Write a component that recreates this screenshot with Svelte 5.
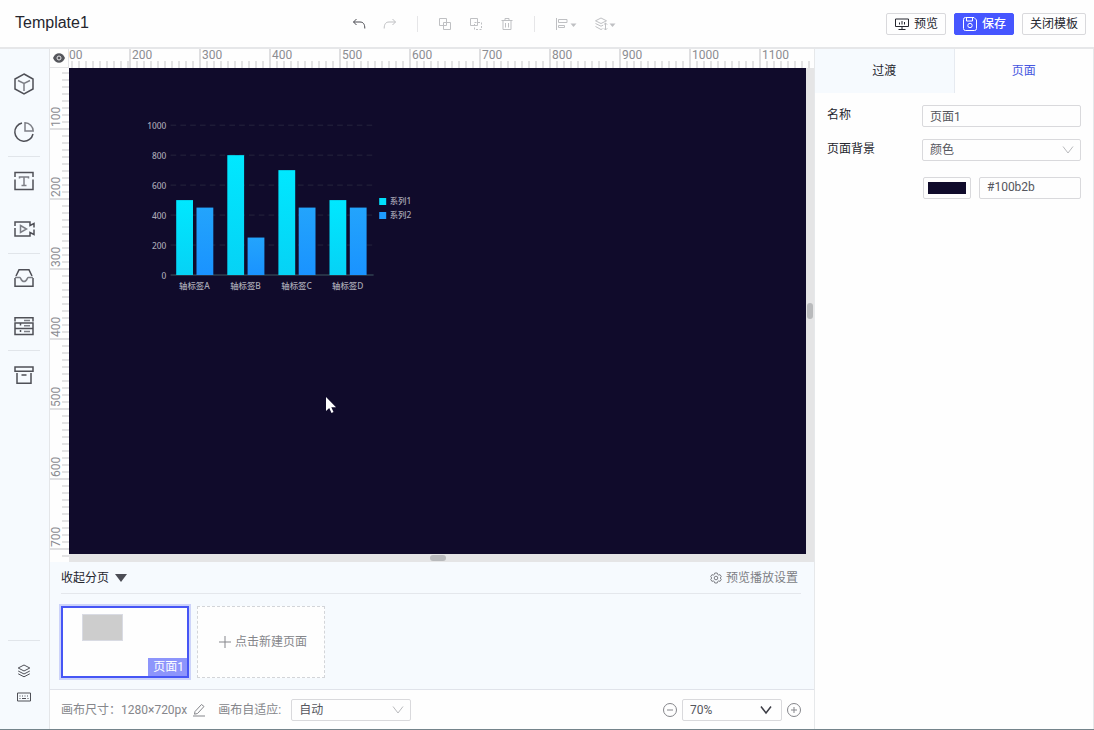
<script lang="ts">
    let pageName = $state("页面1");
    let backgroundType = $state("颜色");
    let backgroundColor = $state("#100b2b");
    let fitMode = $state("自动");
    let zoom = $state("70%");

    // The last vertical segment only carries ticks
    const rulerX = ["00", "200", "300", "400", "500", "600", "700", "800", "900", "1000", "1100"];
    const rulerY = ["100", "200", "300", "400", "500", "600", "700", ""];

    const gridValues = [0, 200, 400, 600, 800, 1000];
    const chartData = [
        { label: "轴标签A", a: 500, b: 450 },
        { label: "轴标签B", a: 800, b: 250 },
        { label: "轴标签C", a: 700, b: 450 },
        { label: "轴标签D", a: 500, b: 450 },
    ];

    // Plot area of the chart, in its own viewBox units
    const plotLeft = 58;
    const plotBottom = 250;
    const columnWidth = 73;
    const barWidth = 24;

    function barHeight(value: number) {
        return (value / 1000) * 214;
    }
</script>

{#snippet chevron()}
    <svg class="chevron" width="12" height="12" viewBox="0 0 12 12"><path d="M1 2.500 6 9l5-6.500" /></svg>
{/snippet}

<div class="editor">
    <header class="topbar">
        <h1 class="title">Template1</h1>

        <div class="toolbar">
            <button class="tool active" aria-label="撤销">
                <svg width="14" height="14" viewBox="0 0 14 14"><path d="M4.500 2 1.500 5l3 3M1.500 5H8c3.200 0 4.800 2 4.800 6.500" /></svg>
            </button>
            <button class="tool" aria-label="重做">
                <svg width="14" height="14" viewBox="0 0 14 14"><path d="m9.500 2 3 3-3 3M12.500 5H6C2.800 5 1.200 7 1.200 11.500" /></svg>
            </button>
            <span class="separator"></span>
            <button class="tool" aria-label="组合">
                <svg width="14" height="14" viewBox="0 0 14 14"><path d="M1.500 1.500h7v7h-7zM5.500 5.500h7v7h-7z" /></svg>
            </button>
            <button class="tool" aria-label="取消组合">
                <svg width="14" height="14" viewBox="0 0 14 14"><path d="M1.500 1.500h7v7h-7z" /><path stroke-dasharray="2 1.500" d="M5.500 5.500h7v7h-7z" /></svg>
            </button>
            <button class="tool" aria-label="删除">
                <svg width="14" height="14" viewBox="0 0 14 14"><path d="M1.500 3.500h11M5 3.500v-2h4v2M3 3.500v9h8v-9M5.500 6v4.500M8.500 6v4.500" /></svg>
            </button>
            <span class="separator"></span>
            <button class="tool" aria-label="对齐">
                <svg width="22" height="14" viewBox="0 0 22 14">
                    <path d="M1.500 1v12M3.500 2.500h8.500v3h-8.500zM3.500 8.500h6v2h-6z" />
                    <path class="solid" d="M15.500 6.500h6l-3 3.500z" />
                </svg>
            </button>
            <button class="tool" aria-label="图层顺序">
                <svg width="22" height="14" viewBox="0 0 22 14">
                    <path d="M7 1 1.500 3.800 7 6.500l5.500-2.700zM1.500 6.500 7 9.200l2-1M1.500 9.500 7 12.500l1.500-.8M11.500 6v7M9.800 7.700l1.700-1.700 1.700 1.700M9.800 11.300l1.700 1.700 1.700-1.700" />
                    <path class="solid" d="M15.500 6.500h6l-3 3.500z" />
                </svg>
            </button>
        </div>

        <div class="actions">
            <button class="btn">
                <svg width="16" height="14" viewBox="0 0 16 14"><path d="M1.500 2h13v7.500h-13zM4.500 12.500h7M8 9.500v3M5.500 5.500v2M8 4v3.500M10.500 5v2.500" /></svg>
                预览
            </button>
            <button class="btn primary">
                <svg width="16" height="16" viewBox="0 0 16 16"><path d="M1.500 3.500v9q0 2 2 2h9q2 0 2-2V4l-2.500-2.500h-8.500q-2 0-2 2zM4.500 1.500v3.500h6V1.500" /><circle cx="8" cy="9.500" r="2.200" /></svg>
                保存
            </button>
            <button class="btn">关闭模板</button>
        </div>
    </header>

    <div class="body">
        <nav class="sidebar">
            <button aria-label="组件">
                <svg width="22" height="22" viewBox="0 0 22 22"><path d="m11 1 9 5v10l-9 5-9-5V6z" /><path class="inner" d="m5 7.500 6 3 6-3M11 10.500v7.500" /></svg>
            </button>
            <button aria-label="图表">
                <svg width="22" height="22" viewBox="0 0 22 22"><path d="M9 2a9.200 9.200 0 1 0 11 11" /><path class="inner" d="M12 1.800V10h8.200A8.500 8.500 0 0 0 12 1.800z" /></svg>
            </button>
            <hr />
            <button aria-label="文本">
                <svg width="22" height="22" viewBox="0 0 22 22"><path d="M2 7V2.500h18V7M2 9.500v10h18v-10" /><path class="inner" d="M6.500 8.500V7h9v1.500M11 7v8.500M8.500 15.500h5" /></svg>
            </button>
            <button aria-label="媒体">
                <svg width="22" height="22" viewBox="0 0 22 22"><path d="M2 8V4h15v3.500l4-2v4M2 10v8h15v-3.500l4 2v-5" /><path class="inner" d="m7.500 7.500 6 3.500-6 3.500z" /></svg>
            </button>
            <hr />
            <button aria-label="素材">
                <svg width="22" height="22" viewBox="0 0 22 22"><path d="M3 9 6 2.800h10L19 9M2 11v8.200h18V11" /><path class="inner" d="M2 10.500h5c.8 0 1 4 4 4s3.200-4 4-4h5" /></svg>
            </button>
            <button aria-label="数据">
                <svg width="22" height="22" viewBox="0 0 22 22"><path d="M2 6.500V2.800h18v3.700M2 8h18v5.500H2zM2 13.500h18v6H2zM7.500 8.500v2M7.500 15v2" /><path class="inner" d="M11 5.500h6M11 10.700h6M11 16.500h6" /></svg>
            </button>
            <hr />
            <button aria-label="收藏">
                <svg width="22" height="22" viewBox="0 0 22 22"><path d="M2 3h18v4.200H2zM4 9v10.200h14V9M8.500 11h5" /></svg>
            </button>

            <div class="sidebar-bottom">
                <hr />
                <button aria-label="图层">
                    <svg width="14" height="14" viewBox="0 0 14 14"><path d="M7 1 1.200 4 7 7l5.800-3zM1.200 7 7 10l5.800-3M1.200 9.800l5.800 3 5.800-3" /></svg>
                </button>
                <button aria-label="快捷键">
                    <svg width="16" height="14" viewBox="0 0 16 14"><path d="M1.500 3h13v8h-13z" /><path stroke-dasharray="1 1.500" d="M3.500 6h9M3.500 8.500h1M11.500 8.500h1" /><path d="M6 8.500h4" /></svg>
                </button>
            </div>
        </nav>

        <main class="workspace">
            <section class="stage">
                <button class="eye" aria-label="显示参考线">
                    <svg width="14" height="10" viewBox="0 0 14 10"><path fill="#55565c" stroke="none" d="M1 5c1.200-3 3.400-4.800 6-4.800S11.800 2 13 5c-1.200 3-3.400 4.800-6 4.800S2.200 8 1 5z" /><circle cx="7" cy="5" r="2" stroke="#e8e8ea" /></svg>
                </button>
                <div class="ruler-x">
                    {#each rulerX as value}
                        <span>{value}</span>
                    {/each}
                </div>
                <div class="ruler-y">
                    {#each rulerY as value}
                        <span>{value}</span>
                    {/each}
                </div>

                <div class="canvas" style="background: {backgroundColor}">
                    <svg class="chart" viewBox="0 0 430 290">
                        <defs>
                            <linearGradient id="series-a" x1="0" y1="0" x2="0" y2="1">
                                <stop offset="0" stop-color="#00e8ff" />
                                <stop offset="1" stop-color="#06d2f5" />
                            </linearGradient>
                            <linearGradient id="series-b" x1="0" y1="0" x2="0" y2="1">
                                <stop offset="0" stop-color="#23a4fc" />
                                <stop offset="1" stop-color="#1a93ff" />
                            </linearGradient>
                        </defs>
                        {#each gridValues as value}
                            <text x="52" y={plotBottom - barHeight(value) + 5} text-anchor="end">{value}</text>
                            {#if value > 0}
                                <line class="grid-line" x1={plotLeft} x2={plotLeft + 290} y1={plotBottom - barHeight(value)} y2={plotBottom - barHeight(value)} />
                            {/if}
                        {/each}
                        <line class="axis" x1={plotLeft} x2={plotLeft + 290} y1={plotBottom} y2={plotBottom} />
                        {#each chartData as item, i}
                            <rect fill="url(#series-a)" x={plotLeft + i * columnWidth + 8} y={plotBottom - barHeight(item.a)} width={barWidth} height={barHeight(item.a)} />
                            <rect fill="url(#series-b)" x={plotLeft + i * columnWidth + 37} y={plotBottom - barHeight(item.b)} width={barWidth} height={barHeight(item.b)} />
                            <text x={plotLeft + i * columnWidth + 34} y="270" text-anchor="middle">{item.label}</text>
                        {/each}
                        <rect fill="#00e0fb" x="356" y="140" width="10" height="10" />
                        <text x="371" y="149">系列1</text>
                        <rect fill="#1e9bff" x="356" y="160" width="10" height="10" />
                        <text x="371" y="169">系列2</text>
                    </svg>
                    <svg class="cursor" width="12" height="18" viewBox="0 0 12 18"><path fill="#fff" d="M1 1v14l3.200-3 2.300 5 2-1-2.200-4.700H11z" /></svg>
                </div>

                <div class="scroll-y"><span></span></div>
                <div class="scroll-x"><span></span></div>
            </section>

            <section class="pages">
                <div class="pages-head">
                    <button class="toggle">
                        收起分页
                        <svg width="12" height="8" viewBox="0 0 12 8"><path fill="#4c4d55" d="M0 0h12L6 8z" /></svg>
                    </button>
                    <button class="settings">
                        <svg width="12" height="12" viewBox="0 0 12 12"><path d="M4.800 1h2.400l.5 1.500.8.500 1.600-.3 1.200 2L10.200 6l1.100 1.300-1.200 2L8.500 9l-.8.500L7.200 11H4.800l-.5-1.500L3.500 9l-1.600.3-1.200-2L1.800 6 .7 4.700l1.200-2 1.600.3.800-.5z" /><circle cx="6" cy="6" r="1.800" /></svg>
                        预览播放设置
                    </button>
                </div>
                <div class="thumbs">
                    <button class="thumb">
                        <span class="thumb-block"></span>
                        <span class="thumb-name">页面1</span>
                    </button>
                    <button class="new-page">
                        <svg width="12" height="12" viewBox="0 0 12 12"><path d="M6 0v12M0 6h12" /></svg>
                        点击新建页面
                    </button>
                </div>
            </section>

            <footer class="status">
                <span>画布尺寸：1280×720px</span>
                <button class="edit" aria-label="编辑尺寸">
                    <svg width="14" height="14" viewBox="0 0 14 14"><path d="m3 8.500 6.500-7 2.500 2L5.500 10.500 2.500 11.200zM1 13h12" /></svg>
                </button>
                <label for="fit">画布自适应:</label>
                <div class="select fit">
                    <select id="fit" bind:value={fitMode}>
                        <option>自动</option>
                    </select>
                    {@render chevron()}
                </div>
                <div class="zoom">
                    <button aria-label="缩小">
                        <svg width="16" height="16" viewBox="0 0 16 16"><circle cx="8" cy="8" r="6.500" /><path d="M5 8h6" /></svg>
                    </button>
                    <div class="select level">
                        <select aria-label="缩放" bind:value={zoom}>
                            <option>70%</option>
                        </select>
                        {@render chevron()}
                    </div>
                    <button aria-label="放大">
                        <svg width="16" height="16" viewBox="0 0 16 16"><circle cx="8" cy="8" r="6.500" /><path d="M5 8h6M8 5v6" /></svg>
                    </button>
                </div>
            </footer>
        </main>

        <aside class="panel">
            <div class="tabs">
                <button>过渡</button>
                <button class="selected">页面</button>
            </div>
            <div class="form">
                <div class="row">
                    <label for="page-name">名称</label>
                    <input id="page-name" type="text" bind:value={pageName} />
                </div>
                <div class="row">
                    <label for="page-bg">页面背景</label>
                    <div class="select">
                        <select id="page-bg" bind:value={backgroundType}>
                            <option>颜色</option>
                        </select>
                        {@render chevron()}
                    </div>
                </div>
                <div class="row colors">
                    <input class="swatch" type="color" aria-label="选择颜色" bind:value={backgroundColor} />
                    <input type="text" aria-label="颜色值" bind:value={backgroundColor} />
                </div>
            </div>
        </aside>
    </div>
</div>

<style>
    :global(body) {
        margin: 0;
    }

    .editor {
        display: flex;
        flex-direction: column;
        height: 100vh;
        box-sizing: border-box;
        border-bottom: 1px solid #74848b;
        background: #fefefe;
        color: #25262e;
        font-family: Roboto, "Noto Sans CJK SC", sans-serif;
        font-size: 12px;
        line-height: 18px;
    }

    .editor *,
    .editor *::before {
        box-sizing: border-box;
    }

    button,
    input,
    select {
        font: inherit;
        color: inherit;
        margin: 0;
        padding: 0;
        border: 0;
        background: none;
    }

    button {
        display: flex;
        align-items: center;
        justify-content: center;
        white-space: nowrap;
    }

    svg {
        flex: none;
        fill: none;
        stroke: currentColor;
    }

    hr {
        width: 32px;
        height: 1px;
        margin: 0;
        border: 0;
        background: #e1e5ea;
    }

    .topbar {
        display: flex;
        flex: none;
        align-items: center;
        height: 49px;
        padding: 0 8px 0 15px;
        border-bottom: 2px solid #e6e7e9;
    }

    .title {
        flex: none;
        width: 337px;
        margin: 0;
        padding-bottom: 2px;
        font: 400 16px/20px "Liberation Sans", Arial, sans-serif;
    }

    .toolbar {
        display: flex;
        align-items: center;
        gap: 17px;
        color: #bfc0c3;
    }

    .tool.active {
        color: #4a4b52;
    }

    .solid {
        fill: currentColor;
        stroke: none;
    }

    .separator {
        width: 1px;
        height: 16px;
        margin: 0 3px;
        background: #e6e6e8;
    }

    .actions {
        display: flex;
        gap: 8px;
        margin-left: auto;
    }

    .btn {
        gap: 4px;
        height: 22px;
        padding: 0 7px;
        border: 1px solid #d9d9dc;
        border-radius: 2px;
    }

    .btn.primary {
        border-color: #4656ff;
        background: #4656ff;
        color: #fff;
        font-weight: 500;
    }

    .body {
        display: flex;
        flex: 1;
        min-height: 0;
    }

    .sidebar {
        display: flex;
        flex: none;
        flex-direction: column;
        align-items: center;
        width: 50px;
        padding: 11px 2px 19px 0;
        border-right: 1px solid #e4e6e9;
        background: #f6fafe;
        color: #4f5057;
    }

    .sidebar button {
        width: 48px;
        height: 48px;
    }

    .sidebar svg {
        stroke-width: 1.500;
    }

    .sidebar .inner {
        stroke: #7d7f86;
    }

    .sidebar-bottom {
        display: flex;
        flex-direction: column;
        align-items: center;
        margin-top: auto;
    }

    .sidebar-bottom hr {
        margin-bottom: 17px;
    }

    .sidebar-bottom button {
        height: 26px;
    }

    .sidebar-bottom svg {
        stroke-width: 1;
    }

    .workspace {
        display: flex;
        flex: 1;
        flex-direction: column;
        min-width: 0;
    }

    .stage {
        display: grid;
        flex: 1;
        grid-template-columns: 19px minmax(0, 1fr) 8px;
        grid-template-rows: 19px minmax(0, 1fr) 8px;
        min-height: 0;
        background: #e5e5e6;
    }

    .eye {
        border-right: 1px solid #e4e4e6;
        border-bottom: 1px solid #e4e4e6;
        background: #fefefe;
    }

    .ruler-x,
    .ruler-y {
        display: flex;
        overflow: hidden;
        background: #fefefe;
        color: #8b8c91;
        line-height: 12px;
    }

    .ruler-x {
        grid-column: 2 / 4;
    }

    .ruler-x span {
        flex: none;
        width: 70px;
        padding-left: 1px;
        border-left: 2px solid #dfdfe1;
        background: repeating-linear-gradient(90deg, transparent 0 5px, #e3e3e4 5px 7px) 0 100% / 68px 7px no-repeat;
    }

    /* The ruler starts part way through its first segment */
    .ruler-x span:first-child {
        width: 60px;
        padding-left: 0;
        border-left: 0;
        background-position: -3px 100%;
    }

    .ruler-y {
        flex-direction: column;
        grid-row: 2 / 4;
    }

    .ruler-y span {
        flex: none;
        height: 70px;
        padding-top: 1px;
        border-top: 2px solid #dfdfe1;
        background: repeating-linear-gradient(180deg, transparent 0 5px, #e3e3e4 5px 7px) 0 0 / 7px 68px no-repeat;
        writing-mode: vertical-rl;
        transform: rotate(180deg);
    }

    .ruler-y span:first-child {
        margin-top: -8px;
    }

    .canvas {
        position: relative;
        overflow: hidden;
    }

    .chart {
        position: absolute;
        top: 32px;
        left: 61px;
        width: 301px;
        height: 203px;
        stroke: none;
    }

    .chart text {
        fill: #a9a8b5;
        font-family: "Noto Sans", "Noto Sans CJK SC", sans-serif;
        font-size: 12px;
        font-weight: 500;
    }

    .grid-line {
        stroke: #2f3045;
        stroke-dasharray: 8 6;
    }

    .axis {
        stroke: #2f4150;
        stroke-width: 2;
    }

    .cursor {
        position: absolute;
        top: 328px;
        left: 256px;
        stroke: none;
    }

    .scroll-x,
    .scroll-y {
        display: flex;
        align-items: center;
        justify-content: center;
    }

    .scroll-x {
        grid-column: 2;
    }

    .scroll-x span,
    .scroll-y span {
        border-radius: 3px;
        background: #b9babc;
    }

    .scroll-x span {
        width: 16px;
        height: 6px;
    }

    .scroll-y span {
        width: 6px;
        height: 16px;
    }

    .pages {
        flex: none;
        padding: 0 13px 11px 11px;
        border-bottom: 1px solid #e0e3ea;
        background: #f6fafe;
    }

    .pages-head {
        display: flex;
        align-items: center;
        justify-content: space-between;
        height: 32px;
        padding-right: 3px;
        border-bottom: 1px solid #e4e7ec;
    }

    .toggle {
        gap: 6px;
    }

    .toggle svg {
        stroke: none;
    }

    .settings {
        gap: 4px;
        color: #7d7e84;
    }

    .thumbs {
        display: flex;
        gap: 8px;
        margin-top: 12px;
    }

    .thumb,
    .new-page {
        width: 128px;
        height: 72px;
        background: #fefefe;
    }

    .thumb {
        position: relative;
        border: 2px solid #4656f5;
        box-shadow: 0 0 0 2px #ccd3fa;
    }

    .thumb-block {
        position: absolute;
        top: 6px;
        left: 19px;
        width: 41px;
        height: 27px;
        border: 1px solid #d9dbe3;
        background: #cdcdcd;
    }

    .thumb-name {
        position: absolute;
        right: 0;
        bottom: 0;
        padding: 0 3px 0 5px;
        background: #8d95fb;
        color: #fff;
    }

    .new-page {
        gap: 4px;
        padding-left: 4px;
        border: 1px dashed #d3d5d9;
        color: #85868b;
    }

    .status {
        display: flex;
        flex: none;
        align-items: center;
        height: 39px;
        padding: 0 12px 0 11px;
        color: #85868b;
        white-space: nowrap;
    }

    .edit {
        margin: 0 12px 0 5px;
    }

    .select {
        position: relative;
    }

    .select select {
        display: block;
        width: 100%;
        height: 22px;
        padding: 0 7px;
        border: 1px solid #d9d9dc;
        border-radius: 2px;
        appearance: none;
        background: #fefefe;
        color: #55565d;
    }

    .chevron {
        position: absolute;
        top: 5px;
        right: 7px;
        color: #b9babd;
        pointer-events: none;
    }

    .fit {
        width: 120px;
        margin-left: 10px;
    }

    .zoom {
        display: flex;
        align-items: center;
        gap: 4px;
        margin-left: auto;
    }

    .level {
        width: 100px;
    }

    .level .chevron {
        right: 10px;
        color: #3c3d45;
        stroke-width: 1.500;
    }

    .panel {
        flex: none;
        width: 280px;
        border-right: 1px solid #e6e8ea;
        border-left: 1px solid #e6e8ea;
    }

    .tabs {
        display: flex;
        height: 44px;
    }

    .tabs button {
        flex: 1;
        background: #f6fafe;
    }

    .tabs .selected {
        border-left: 1px solid #e6eaf0;
        background: #fefefe;
        color: #4656e0;
    }

    .form {
        display: flex;
        flex-direction: column;
        gap: 12px;
        padding: 12px;
    }

    .row {
        display: flex;
        align-items: center;
    }

    .row label {
        flex: none;
        width: 95px;
        padding-bottom: 2px;
    }

    .row .select {
        flex: 1;
    }

    .row input {
        flex: 1;
        min-width: 0;
        height: 22px;
        padding: 0 7px 2px;
        border: 1px solid #d9d9dc;
        border-radius: 2px;
        color: #55565d;
    }

    .colors {
        gap: 8px;
        margin-top: 4px;
        padding-left: 96px;
    }

    .row .swatch {
        flex: none;
        width: 48px;
        padding: 4px;
    }

    .swatch::-webkit-color-swatch-wrapper {
        padding: 0;
    }

    .swatch::-webkit-color-swatch {
        border: 0;
        border-radius: 0;
    }
</style>
